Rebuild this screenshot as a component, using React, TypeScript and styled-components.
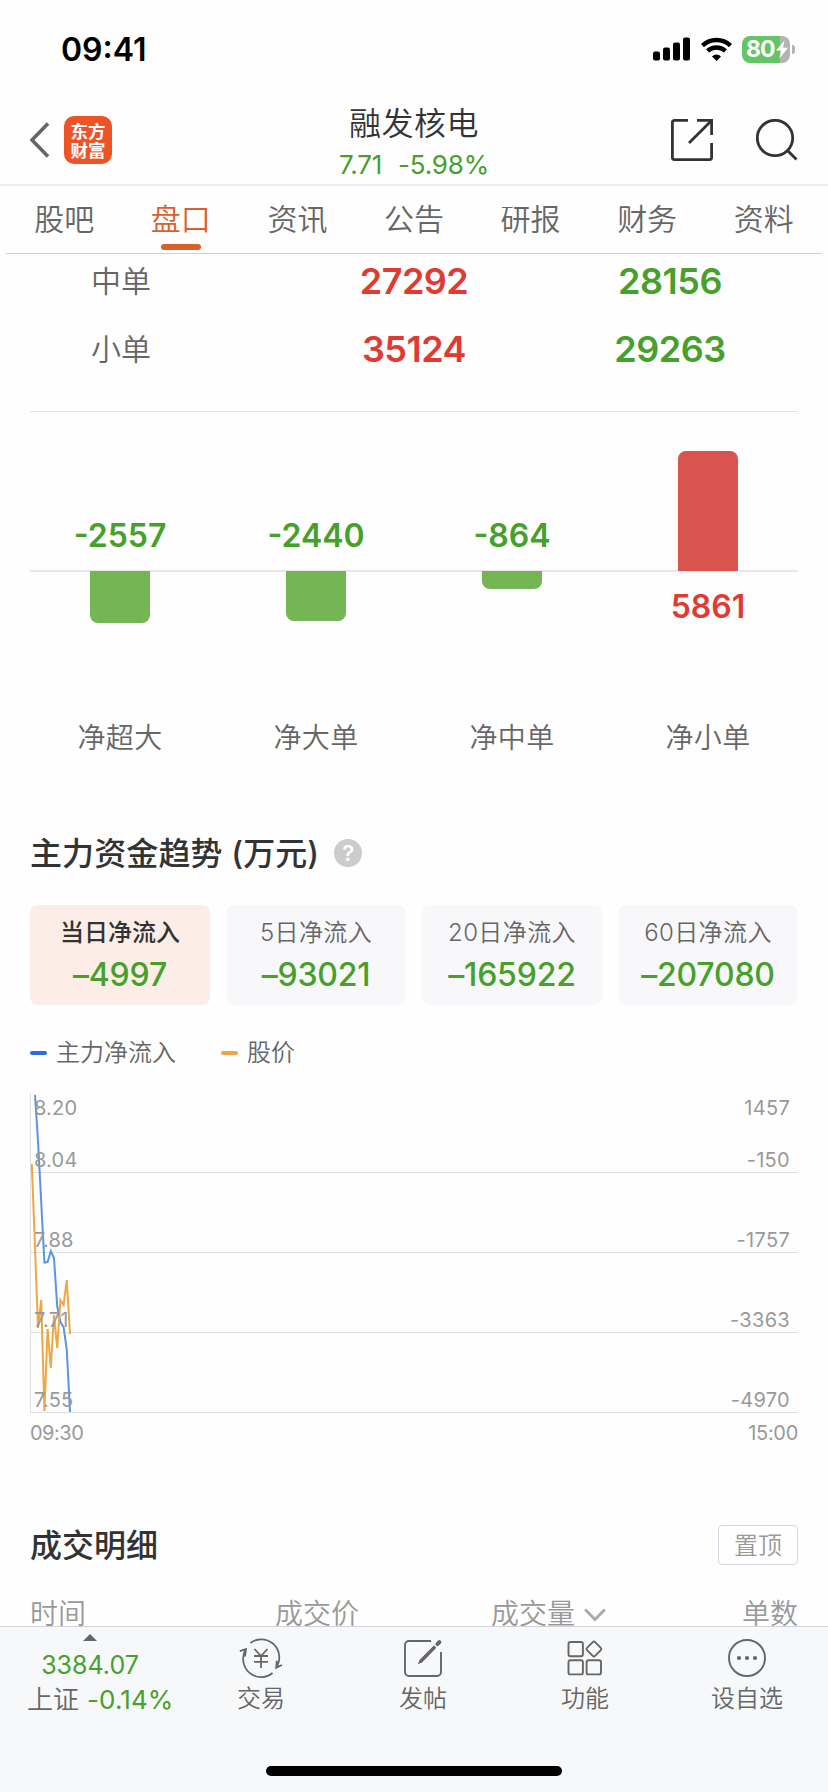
import React from 'react';
import styled, { createGlobalStyle } from 'styled-components';

const GREEN = '#46a02b';
const RED = '#e03a32';
const ORANGE = '#d9602a';
const GRAY = '#666';
const MUTED = '#999';

const GlobalStyle = createGlobalStyle`
  *, *::before, *::after { box-sizing: border-box; }
  html, body { margin: 0; padding: 0; background: #fefefe; }
  body {
    font-family: Inter, "Noto Sans CJK SC", sans-serif;
    color: #333;
    -webkit-font-smoothing: antialiased;
  }
  svg { display: block; flex: none; }
`;

const Screen = styled.div`
  width: 828px;
  height: 1792px;
  display: flex;
  flex-direction: column;
  overflow: hidden;
  background: #fefefe;
`;

/* Single line of text; $ls is tracking in px */
const Text = styled.span<{
  $size: number;
  $color?: string;
  $weight?: number;
  $ls?: number;
}>`
  display: block;
  white-space: pre;
  font-size: ${p => p.$size}px;
  line-height: ${p => Math.round(p.$size * 1.25)}px;
  color: ${p => p.$color ?? '#333'};
  font-weight: ${p => p.$weight ?? 400};
  letter-spacing: ${p => p.$ls ?? 0}px;
`;

const Label = styled(Text)`
  font-weight: ${p => p.$weight ?? 350};
`;

const StatusBar = styled.div`
  height: 88px;
  flex: none;
  display: flex;
  justify-content: space-between;
  align-items: center;
  padding: 10px 33px 0 61px;
  > :first-child { padding-top: 2px; }
`;

const StatusIcons = styled.div`
  display: flex;
  align-items: center;
  gap: 10px;
`;

const Battery = styled.div`
  display: flex;
  align-items: center;
  gap: 2px;
`;

const BatteryBody = styled.div`
  width: 48px;
  height: 27px;
  border-radius: 8px;
  background: linear-gradient(to right, #65c466 38px, #b4b4b4 38px);
  display: flex;
  align-items: center;
  padding-left: 4px;
`;

const BatteryNub = styled.div`
  width: 3px;
  height: 9px;
  border-radius: 0 4px 4px 0;
  background: #b4b4b4;
`;

const Header = styled.header`
  height: 98px;
  flex: none;
  display: grid;
  grid-template-columns: 1fr 200px 1fr;
  align-items: center;
  border-bottom: 2px solid #ececec;
  padding: 0 30px;
`;

const HeaderSide = styled.div<{ $end?: boolean }>`
  display: flex;
  align-items: center;
  height: 96px;
  padding-top: 8px;
  justify-content: ${p => (p.$end ? 'flex-end' : 'flex-start')};
  gap: ${p => (p.$end ? 43 : 14)}px;
`;

const Logo = styled.div`
  width: 48px;
  height: 48px;
  border-radius: 10px;
  background: #ec5428;
  color: #fff;
  display: flex;
  flex-direction: column;
  align-items: center;
  justify-content: center;
  font: 700 17.5px/19.5px "Noto Sans CJK SC", sans-serif;
`;

const HeaderTitle = styled.div`
  display: flex;
  flex-direction: column;
  align-items: center;
  height: 96px;
  padding-top: 16px;
  gap: 4px;
`;

const Quote = styled.div`
  display: flex;
  gap: 16px;
`;

const Tabs = styled.nav`
  height: 68px;
  flex: none;
  margin: 0 6px;
  display: grid;
  grid-template-columns: repeat(7, 1fr);
  border-bottom: 1px solid #d0d0d0;
`;

const Tab = styled.div<{ $active?: boolean }>`
  display: flex;
  flex-direction: column;
  align-items: center;
  padding-top: 14px;
  gap: 6px;
  &::after {
    content: '';
    width: 40px;
    height: 6px;
    border-radius: 3px;
    background: ${p => (p.$active ? ORANGE : 'transparent')};
  }
`;

const Body = styled.main`
  flex: 1;
  min-height: 0;
  overflow: hidden;
  padding: 0 30px;
`;

const OrderTable = styled.div`
  height: 165px;
  margin-top: -7px;
  border-bottom: 1px solid #e3e3e3;
`;

const OrderRow = styled.div`
  height: 68px;
  display: grid;
  grid-template-columns: repeat(3, 1fr);
  align-items: center;
  justify-items: center;
  > :first-child { justify-self: start; padding-left: 61px; }
`;

const FourColumns = styled.div`
  display: grid;
  grid-template-columns: repeat(4, 180px);
  gap: 16px;
`;

const BarChart = styled(FourColumns)`
  height: 298px;
  background: linear-gradient(#e8e8e8, #e8e8e8) 0 158px / 100% 2px no-repeat;
`;

const BarColumn = styled.div`
  display: grid;
  grid-template-rows: 159px 139px;
  justify-items: center;
`;

const Half = styled.div<{ $up?: boolean }>`
  display: flex;
  flex-direction: column;
  align-items: center;
  justify-content: ${p => (p.$up ? 'flex-end' : 'flex-start')};
`;

const Bar = styled.div<{ $up?: boolean }>`
  width: 60px;
  border-radius: ${p => (p.$up ? '8px 8px 0 0' : '0 0 8px 8px')};
  background: ${p => (p.$up ? '#d9534f' : '#74b554')};
`;

const BarValue = styled.div<{ $up?: boolean }>`
  padding: ${p => (p.$up ? '16px 0 0' : '0 0 15px')};
`;

const BarLabels = styled(FourColumns)`
  justify-items: center;
  padding-top: 11px;
`;

const TrendHeading = styled.div`
  display: flex;
  align-items: center;
  gap: 15px;
  margin-top: 77px;
  height: 40px;
  > :first-child { padding-top: 2px; }
`;

const HelpDot = styled.div`
  width: 28px;
  height: 28px;
  border-radius: 50%;
  background: #ccc;
  color: #fff;
  display: flex;
  align-items: center;
  justify-content: center;
  font-weight: 600;
  font-size: 22px;
  line-height: 28px;
`;

const Cards = styled(FourColumns)`
  margin-top: 32px;
`;

const Card = styled.div<{ $active?: boolean }>`
  height: 100px;
  border-radius: 8px;
  background: ${p => (p.$active ? '#fceee7' : '#f8f8fb')};
  display: flex;
  flex-direction: column;
  align-items: center;
  padding-top: 13px;
  gap: 7px;
`;

const Legend = styled.div`
  display: flex;
  margin-top: 33px;
  height: 30px;
  gap: 45px;
`;

const LegendItem = styled.div<{ $color: string }>`
  display: flex;
  align-items: center;
  gap: 9px;
  &::before {
    content: '';
    width: 17px;
    height: 4px;
    border-radius: 2px;
    background: ${p => p.$color};
  }
`;

const TrendChart = styled.div`
  position: relative;
  margin-top: 25px;
  height: 320px;
  border-left: 1px solid #e0e0e0;
`;

const TrendRow = styled.div<{ $first?: boolean }>`
  height: 80px;
  border-bottom: 1px solid #e0e0e0;
  display: flex;
  flex-direction: column;
  justify-content: space-between;
  padding: ${p => (p.$first ? '3px' : '0')} 8px 0 3px;
`;

/* Axis values are painted over the trend lines */
const AxisPair = styled.div`
  position: relative;
  z-index: 1;
  display: flex;
  justify-content: space-between;
  &:last-child { margin: auto 0 -1px; }
`;

const TrendLines = styled.svg`
  position: absolute;
  left: -1px;
  top: 0;
`;

const TimeAxis = styled.div`
  display: flex;
  justify-content: space-between;
  margin-top: 8px;
`;

const DetailHeading = styled.div`
  display: flex;
  justify-content: space-between;
  align-items: center;
  height: 40px;
  margin-top: 79px;
  > :first-child { padding-top: 2px; }
`;

const PinButton = styled.div`
  width: 80px;
  height: 40px;
  border: 1px solid #d6d6e0;
  border-radius: 4px;
  display: flex;
  align-items: center;
  justify-content: center;
  padding-top: 1px;
`;

const DetailColumns = styled.div`
  display: grid;
  grid-template-columns: 245px 216px 1fr auto;
  align-items: center;
  margin-top: 32px;
`;

const SortLabel = styled.div`
  display: flex;
  align-items: center;
  gap: 9px;
`;

const BottomBar = styled.footer`
  height: 166px;
  flex: none;
  border-top: 1px solid #d3d3dc;
  background: #f7f8fa;
  display: flex;
  flex-direction: column;
  align-items: center;
`;

const Actions = styled.div`
  width: 828px;
  height: 139px;
  display: grid;
  grid-template-columns: 180px repeat(4, 162px);
`;

const IndexCell = styled.div`
  display: flex;
  flex-direction: column;
  align-items: center;
  padding-top: 7px;
  gap: 2px;
  svg { margin-bottom: 7px; }
`;

const IndexLine = styled.div`
  display: flex;
  gap: 8px;
  align-self: flex-start;
  margin-left: 27px;
`;

const Action = styled.div`
  display: flex;
  flex-direction: column;
  align-items: center;
  padding-top: 11px;
  gap: 6px;
`;

const HomeIndicator = styled.div`
  width: 296px;
  height: 10px;
  border-radius: 5px;
  background: #000;
`;

const SignalIcon = () => (
  <svg width="38" height="24" viewBox="0 0 38 24">
    <rect x="0" y="14.5" width="7" height="9" rx="2" />
    <rect x="10" y="10.5" width="7" height="13" rx="2" />
    <rect x="20" y="5.5" width="7" height="18" rx="2" />
    <rect x="30" y="0.5" width="7" height="23" rx="2" />
  </svg>
);

const WifiIcon = () => (
  <svg width="31" height="24" viewBox="0 0 31 24">
    <g fill="none" stroke="#000" strokeWidth="4.4">
      <path d="M1.5 8.6 A20.5 20.5 0 0 1 29.5 8.6" />
      <path d="M6.6 14 A13 13 0 0 1 24.4 14" />
    </g>
    <path d="M15.5 24 L11 19.4 A6.5 6.5 0 0 1 20 19.4 Z" />
  </svg>
);

const BoltIcon = () => (
  <svg width="14" height="19" viewBox="0 0 14 19">
    <path d="M9.5 0.5 L1 10.5 L6 10.5 L4.5 18.5 L13 7.8 L8 7.8 Z" fill="#fff" />
  </svg>
);

const BackIcon = () => (
  <svg width="20" height="36" viewBox="0 0 20 36" fill="none" stroke="#666" strokeWidth="3.6">
    <path d="M18 1.5 L2 18 L18 34.5" />
  </svg>
);

const ShareIcon = () => (
  <svg width="42" height="42" viewBox="0 0 42 42" fill="none" stroke="#333" strokeWidth="2.8">
    <path d="M17 1.4 H3.4 A2 2 0 0 0 1.4 3.4 V38.6 A2 2 0 0 0 3.4 40.6 H38.6 A2 2 0 0 0 40.6 38.6 V24" />
    <path d="M26 1.4 H40.6 V16" />
    <path d="M40.6 1.4 L18 24" />
  </svg>
);

const SearchIcon = () => (
  <svg width="42" height="42" viewBox="0 0 42 42" fill="none" stroke="#333" strokeWidth="2.8">
    <circle cx="19" cy="19" r="17.7" />
    <path d="M31.5 31.5 L40.5 40.5" />
  </svg>
);

const TradeIcon = () => (
  <svg width="46" height="40" viewBox="0 0 46 40" fill="none" stroke="#666" strokeWidth="1.8">
    <path d="M12.4 5 A18 18 0 0 1 40 26 Q39.6 27.6 38.4 29.8 M38.8 22.6 L38.2 29.8 L44 27" />
    <path d="M34.6 35 A18 18 0 0 1 5.9 16 Q6.2 13.6 7.4 11.4 M1.8 13.2 L8 11 L7 18.4" />
    <path d="M16.5 11 L23 18 L29.5 11 M23 18 V30 M16 18 H30 M16 23.8 H30" />
  </svg>
);

const PostIcon = () => (
  <svg width="40" height="40" viewBox="0 0 40 40" fill="none" stroke="#666" strokeWidth="1.9">
    <path d="M28 3 H6 A4 4 0 0 0 2 7 V34 A4 4 0 0 0 6 38 H34 A4 4 0 0 0 38 34 V14" />
    <path d="M14.6 26.6 L17 21.4 L31 7.6 L33.2 9.8 L19.2 24 Z" fill="#666" stroke="none" />
    <path d="M17 24.2 L32 8.8" strokeWidth="3" />
    <path d="M34.4 6.2 L36.4 4.2" strokeWidth="4" strokeLinecap="round" />
  </svg>
);

const GridIcon = () => (
  <svg width="40" height="40" viewBox="0 0 40 40" fill="none" stroke="#666" strokeWidth="1.9">
    <rect x="3.5" y="4" width="14.4" height="14.2" rx="2" />
    <rect x="3.5" y="22.2" width="14.4" height="14.2" rx="2" />
    <rect x="21.6" y="22.2" width="14.4" height="14.2" rx="2" />
    <rect x="23.2" y="5.3" width="11.4" height="11.4" rx="1.6" transform="rotate(45 28.9 11)" />
  </svg>
);

const MoreIcon = () => (
  <svg width="40" height="40" viewBox="0 0 40 40">
    <circle cx="20" cy="20" r="18" fill="none" stroke="#666" strokeWidth="1.9" />
    <g fill="#666">
      <circle cx="12" cy="20" r="2.1" />
      <circle cx="20" cy="20" r="2.1" />
      <circle cx="28" cy="20" r="2.1" />
    </g>
  </svg>
);

const tabs = ['股吧', '盘口', '资讯', '公告', '研报', '财务', '资料'];

const orders = [
  { label: '中单', buy: '27292', sell: '28156' },
  { label: '小单', buy: '35124', sell: '29263' },
];

const netFlows = [
  { label: '净超大', value: -2557 },
  { label: '净大单', value: -2440 },
  { label: '净中单', value: -864 },
  { label: '净小单', value: 5861 },
];

const periods = [
  { label: '当日净流入', value: '–4997', active: true },
  { label: '5日净流入', value: '–93021' },
  { label: '20日净流入', value: '–165922' },
  { label: '60日净流入', value: '–207080' },
];

const axis = [
  [['8.20', '1457'], ['8.04', '-150']],
  [['7.88', '-1757']],
  [['7.71', '-3363']],
  [['7.55', '-4970']],
];

const actions = [
  { label: '交易', icon: <TradeIcon /> },
  { label: '发帖', icon: <PostIcon /> },
  { label: '功能', icon: <GridIcon /> },
  { label: '设自选', icon: <MoreIcon /> },
];

const PX_PER_UNIT = 120 / 5861;

const App: React.FC = () => (
  <>
    <GlobalStyle />
    <Screen>
      <StatusBar>
        <Text $size={32} $weight={600} $color="#000" $ls={0}>09:41</Text>
        <StatusIcons>
          <SignalIcon />
          <WifiIcon />
          <Battery>
            <BatteryBody>
              <Text $size={23} $weight={700} $color="#fff" $ls={-0.9}>80</Text>
              <BoltIcon />
            </BatteryBody>
            <BatteryNub />
          </Battery>
        </StatusIcons>
      </StatusBar>

      <Header>
        <HeaderSide>
          <BackIcon />
          <Logo>
            <span>东方</span>
            <span>财富</span>
          </Logo>
        </HeaderSide>
        <HeaderTitle>
          <Label $size={32} $ls={0.5}>融发核电</Label>
          <Quote>
            <Text $size={26} $color={GREEN} $ls={-0.2}>7.71</Text>
            <Text $size={26} $color={GREEN} $ls={-0.2}>-5.98%</Text>
          </Quote>
        </HeaderTitle>
        <HeaderSide $end>
          <ShareIcon />
          <SearchIcon />
        </HeaderSide>
      </Header>

      <Tabs>
        {tabs.map(t => (
          <Tab key={t} $active={t === '盘口'}>
            <Label $size={30} $color={t === '盘口' ? ORANGE : GRAY}>{t}</Label>
          </Tab>
        ))}
      </Tabs>

      <Body>
        <OrderTable>
          {orders.map(o => (
            <OrderRow key={o.label}>
              <Label $size={30} $color={GRAY}>{o.label}</Label>
              <Text $size={36} $weight={600} $color={RED} $ls={-0.5}>{o.buy}</Text>
              <Text $size={36} $weight={600} $color={GREEN} $ls={-0.5}>{o.sell}</Text>
            </OrderRow>
          ))}
        </OrderTable>

        <BarChart>
          {netFlows.map(f => {
            const up = f.value > 0;
            const bar = <Bar $up={up} style={{ height: Math.abs(f.value) * PX_PER_UNIT }} />;
            const value = (
              <BarValue $up={up}>
                <Text $size={32} $weight={600} $color={up ? RED : GREEN}>{f.value}</Text>
              </BarValue>
            );
            return (
              <BarColumn key={f.label}>
                <Half $up>{up ? bar : value}</Half>
                <Half>{up ? value : bar}</Half>
              </BarColumn>
            );
          })}
        </BarChart>
        <BarLabels>
          {netFlows.map(f => (
            <Label key={f.label} $size={28} $ls={0.4} $color={GRAY}>{f.label}</Label>
          ))}
        </BarLabels>

        <TrendHeading>
          <Text $size={32} $weight={500} $ls={0.1}>主力资金趋势 (万元)</Text>
          <HelpDot>?</HelpDot>
        </TrendHeading>

        <Cards>
          {periods.map(p => (
            <Card key={p.label} $active={p.active}>
              <Label $size={24} $color={p.active ? '#333' : GRAY} $weight={p.active ? 500 : 350} $ls={p.active ? 0 : 0.4}>{p.label}</Label>
              <Text $size={32} $weight={500} $color={GREEN} $ls={-0.2}>{p.value}</Text>
            </Card>
          ))}
        </Cards>

        <Legend>
          <LegendItem $color="#2f6be0">
            <Label $size={24} $color={GRAY}>主力净流入</Label>
          </LegendItem>
          <LegendItem $color="#efa743">
            <Label $size={24} $color={GRAY}>股价</Label>
          </LegendItem>
        </Legend>

        <TrendChart>
          <TrendLines width="60" height="320" viewBox="0 0 60 320" fill="none" strokeWidth="2">
            <polyline
              stroke="#5b94e3"
              points="5,2 8,48 11,105 14.4,169.5 17.6,169 20.8,158 24,165 27.2,213 30.4,229 33.6,234 36.8,257 40,319"
            />
            <polyline
              stroke="#efa743"
              points="1.8,71 4.8,149 8,235 11.2,207 14.4,318 17.6,236 20.8,275 24,222 27.2,255 30.4,207 33.6,212 36.8,187 40,241"
            />
          </TrendLines>
          {axis.map((pairs, i) => (
            <TrendRow key={i} $first={i === 0}>
              {pairs.map(([l, r]) => (
                <AxisPair key={l}>
                  <Text $size={20} $color={MUTED} $ls={0.2}>{l}</Text>
                  <Text $size={20} $color={MUTED} $ls={0.3}>{r}</Text>
                </AxisPair>
              ))}
            </TrendRow>
          ))}
        </TrendChart>
        <TimeAxis>
          <Text $size={20} $color={MUTED} $ls={-0.5}>09:30</Text>
          <Text $size={20} $color={MUTED} $ls={-0.3}>15:00</Text>
        </TimeAxis>

        <DetailHeading>
          <Text $size={32} $weight={500}>成交明细</Text>
          <PinButton>
            <Label $size={24} $color={MUTED}>置顶</Label>
          </PinButton>
        </DetailHeading>
        <DetailColumns>
          <Label $size={28} $color={MUTED}>时间</Label>
          <Label $size={28} $color={MUTED}>成交价</Label>
          <SortLabel>
            <Label $size={28} $color={MUTED}>成交量</Label>
            <svg width="22" height="14" viewBox="0 0 22 14" fill="none" stroke="#aaa" strokeWidth="2.8">
              <path d="M1.2 1.5 L11 11.5 L20.8 1.5" />
            </svg>
          </SortLabel>
          <Label $size={28} $color={MUTED}>单数</Label>
        </DetailColumns>
      </Body>

      <BottomBar>
        <Actions>
          <IndexCell>
            <svg width="14" height="7" viewBox="0 0 14 7">
              <path d="M0 7 L7 0 L14 7 Z" fill="#666" />
            </svg>
            <Text $size={25} $color={GREEN}>3384.07</Text>
            <IndexLine>
              <Label $size={26} $color={GRAY}>上证</Label>
              <Text $size={26} $color={GREEN} $ls={0.1}>-0.14%</Text>
            </IndexLine>
          </IndexCell>
          {actions.map(a => (
            <Action key={a.label}>
              {a.icon}
              <Label $size={24} $color={GRAY}>{a.label}</Label>
            </Action>
          ))}
        </Actions>
        <HomeIndicator />
      </BottomBar>
    </Screen>
  </>
);

export default App;
